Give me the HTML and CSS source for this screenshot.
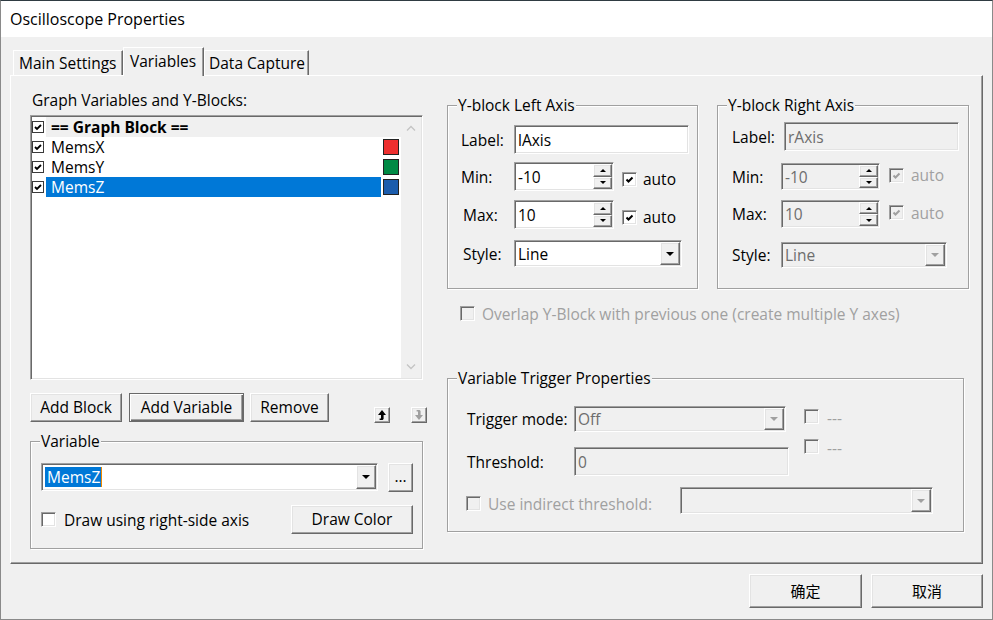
FILE: index.html
```html
<!DOCTYPE html>
<html>
<head>
<meta charset="utf-8">
<title>Oscilloscope Properties</title>
<link rel="stylesheet" href="styles.css">
</head>
<body>
<div class="window">
  <div class="titlebar">Oscilloscope Properties</div>

  <div class="tabs">
    <div class="tab tab-main">Main Settings</div>
    <div class="tab tab-vars active">Variables</div>
    <div class="tab tab-data">Data Capture</div>
  </div>

  <div class="panel">
    <div class="col-left">
      <div class="caption">Graph Variables and Y-Blocks:</div>

      <div class="listbox">
        <div class="list-items">
          <div class="li li-head">
            <span class="lcheck"><span class="lcb"><svg viewBox="0 0 10 10" width="10" height="10"><polyline points="2,5 4,7 8,3" class="ck"/></svg></span></span>
            <span class="ltext">== Graph Block ==</span>
            <span class="lswatch"></span>
          </div>
          <div class="li">
            <span class="lcheck"><span class="lcb"><svg viewBox="0 0 10 10" width="10" height="10"><polyline points="2,5 4,7 8,3" class="ck"/></svg></span></span>
            <span class="ltext">MemsX</span>
            <span class="lswatch"><span class="swatch sw-red"></span></span>
          </div>
          <div class="li">
            <span class="lcheck"><span class="lcb"><svg viewBox="0 0 10 10" width="10" height="10"><polyline points="2,5 4,7 8,3" class="ck"/></svg></span></span>
            <span class="ltext">MemsY</span>
            <span class="lswatch"><span class="swatch sw-green"></span></span>
          </div>
          <div class="li li-sel">
            <span class="lcheck"><span class="lcb"><svg viewBox="0 0 10 10" width="10" height="10"><polyline points="2,5 4,7 8,3" class="ck"/></svg></span></span>
            <span class="ltext">MemsZ</span>
            <span class="lswatch"><span class="swatch sw-blue"></span></span>
          </div>
        </div>
        <div class="vscroll">
          <svg class="chev chev-up" viewBox="0 0 10 6" width="10" height="6"><polyline points="1,5.5 5,1.5 9,5.5"/></svg>
          <svg class="chev chev-down" viewBox="0 0 10 6" width="10" height="6"><polyline points="1,0.5 5,4.5 9,0.5"/></svg>
        </div>
      </div>

      <div class="btnrow">
        <div class="btn btn-addblock">Add Block</div>
        <div class="btn btn-default btn-addvar">Add Variable</div>
        <div class="btn btn-remove">Remove</div>
        <div class="raised arrowbtn arrow-up"><svg viewBox="0 0 14 14" width="14" height="14"><polygon points="7,2 11,7 8.6,7 8.6,11 7.6,12 4.6,12 4.6,10.6 6,10.6 6,7 3,7" fill="#000"/></svg></div>
        <div class="raised arrowbtn arrow-down"><svg viewBox="0 0 14 14" width="14" height="14"><polygon points="7,12 11,7 8.6,7 8.6,3 7.6,2 4.6,2 4.6,3.4 6,3.4 6,7 3,7" fill="#a0a0a0"/></svg></div>
      </div>

      <fieldset class="group vargroup">
        <legend>Variable</legend>
        <div class="gbody vbody">
          <div class="var-row1">
            <div class="field combo-var">
              <span class="seltext">MemsZ</span>
              <span class="raised ddbtn"><span class="tri"></span></span>
            </div>
            <div class="btn btn-dots">...</div>
          </div>
          <div class="var-row2">
            <span class="cb"></span>
            <span class="cblabel">Draw using right-side axis</span>
            <div class="btn btn-drawcolor">Draw Color</div>
          </div>
        </div>
      </fieldset>
    </div>

    <div class="col-right">
      <div class="axisrow">
        <fieldset class="group fs-left">
          <legend>Y-block Left Axis</legend>
          <div class="gbody lbody">
            <div class="frow r1">
              <span class="flabel">Label:</span>
              <div class="field w175">lAxis</div>
            </div>
            <div class="frow r2">
              <span class="flabel">Min:</span>
              <div class="field w100">-10<span class="spin"><span class="raised spinbtn"><span class="tri-s up"></span></span><span class="raised spinbtn"><span class="tri-s"></span></span></span></div>
              <span class="cb autocb"><svg viewBox="0 0 11 11" width="11" height="11"><polyline points="2.5,5.5 4.5,7.5 8.5,3.5" class="ck2"/></svg></span>
              <span class="autotext">auto</span>
            </div>
            <div class="frow r3">
              <span class="flabel ind2">Max:</span>
              <div class="field w100">10<span class="spin"><span class="raised spinbtn"><span class="tri-s up"></span></span><span class="raised spinbtn"><span class="tri-s"></span></span></span></div>
              <span class="cb autocb"><svg viewBox="0 0 11 11" width="11" height="11"><polyline points="2.5,5.5 4.5,7.5 8.5,3.5" class="ck2"/></svg></span>
              <span class="autotext">auto</span>
            </div>
            <div class="frow r4">
              <span class="flabel ind2">Style:</span>
              <div class="field w168">Line<span class="raised ddbtn"><span class="tri"></span></span></div>
            </div>
          </div>
        </fieldset>

        <fieldset class="group fs-right">
          <legend>Y-block Right Axis</legend>
          <div class="gbody rbody">
            <div class="frow r1">
              <span class="flabel lw52">Label:</span>
              <div class="field dis w175">rAxis</div>
            </div>
            <div class="frow r2">
              <span class="flabel lw49">Min:</span>
              <div class="field dis w99">-10<span class="spin"><span class="raised spinbtn"><span class="tri-s up"></span></span><span class="raised spinbtn"><span class="tri-s"></span></span></span></div>
              <span class="cb dis autocb"><svg viewBox="0 0 11 11" width="11" height="11"><polyline points="2.5,5.5 4.5,7.5 8.5,3.5" class="ck2"/></svg></span>
              <span class="autotext distext">auto</span>
            </div>
            <div class="frow r3">
              <span class="flabel lw49">Max:</span>
              <div class="field dis w99">10<span class="spin"><span class="raised spinbtn"><span class="tri-s up"></span></span><span class="raised spinbtn"><span class="tri-s"></span></span></span></div>
              <span class="cb dis autocb"><svg viewBox="0 0 11 11" width="11" height="11"><polyline points="2.5,5.5 4.5,7.5 8.5,3.5" class="ck2"/></svg></span>
              <span class="autotext distext">auto</span>
            </div>
            <div class="frow r4">
              <span class="flabel lw49">Style:</span>
              <div class="field dis w166">Line<span class="raised ddbtn"><span class="tri dis"></span></span></div>
            </div>
          </div>
        </fieldset>
      </div>

      <div class="overlap">
        <span class="cb dis"></span>
        <span class="cblabel distext">Overlap Y-Block with previous one (create multiple Y axes)</span>
      </div>

      <fieldset class="group trigger">
        <legend>Variable Trigger Properties</legend>
        <div class="gbody tbody">
          <div class="trig-top">
            <div class="trig-fields">
              <div class="frow t1">
                <span class="flabel lw107">Trigger mode:</span>
                <div class="field dis w212">Off<span class="raised ddbtn"><span class="tri dis"></span></span></div>
              </div>
              <div class="frow t2">
                <span class="flabel lw107">Threshold:</span>
                <div class="field dis w215">0</div>
              </div>
            </div>
            <div class="trig-checks">
              <div class="tcheck"><span class="cb dis"></span><span class="dash distext">---</span></div>
              <div class="tcheck tcheck2"><span class="cb dis"></span><span class="dash distext">---</span></div>
            </div>
          </div>
          <div class="trig-ind">
            <span class="cb dis indcb"></span>
            <span class="ind-label distext">Use indirect threshold:</span>
            <div class="field dis w253"><span class="raised ddbtn"><span class="tri dis"></span></span></div>
          </div>
        </div>
      </fieldset>
    </div>
  </div>

  <div class="footer">
    <div class="btn btn-ok">确定</div>
    <div class="btn btn-cancel">取消</div>
  </div>
</div>
</body>
</html>
```
FILE: styles.css
```css
* { box-sizing: border-box; }
html, body { margin: 0; padding: 0; }
body {
  width: 993px; height: 620px; overflow: hidden;
  background: #f0f0f0; color: #000;
  font-family: "Open Sans", "Noto Sans CJK SC", sans-serif;
  font-size: 15.5px; line-height: 18px;
}
.window {
  width: 993px; height: 620px;
  border: 1px solid #8a8a8a; border-top-color: #2f3b42;
  display: flex; flex-direction: column;
}
.titlebar {
  flex: none; height: 36px; background: #fff;
  padding-left: 9px; font-size: 16px; line-height: 36px;
}

/* tabs */
.tabs { flex: none; height: 38px; display: flex; align-items: flex-end; padding-left: 12px; }
.tab {
  height: 25px; padding-left: 5px; line-height: 24px; white-space: nowrap;
  border-top: 1px solid #fff; border-left: 1px solid #fff; border-right: 1px solid #696969;
  box-shadow: inset -1px 0 0 #a0a0a0;
}
.tab-main { width: 110px; }
.tab-vars { width: 81px; padding-left: 6px; }
.tab-data { width: 105px; padding-left: 4px; }
.tab.active {
  height: 29px; padding-top: 1px; margin-bottom: -1px;
  background: #f0f0f0; position: relative; z-index: 1;
}

/* panel */
.panel {
  flex: none; margin-left: 9px; width: 973px; height: 489px;
  border-top: 1px solid #fff; border-left: 1px solid #fff;
  border-right: 1px solid #696969; border-bottom: 1px solid #696969;
  box-shadow: inset -1px -1px 0 #a0a0a0;
  display: flex; padding-left: 19px;
}
.col-left { width: 397px; flex: none; display: flex; flex-direction: column; }
.col-right { width: 521px; flex: none; margin-left: 20px; display: flex; flex-direction: column; }

.caption { margin-top: 15px; height: 18px; padding-left: 2px; }

/* sunken frames */
.listbox, .field, .cb {
  border: 1px solid; border-color: #a0a0a0 #fff #fff #a0a0a0;
  box-shadow: inset 1px 1px 0 #696969, inset -1px -1px 0 #e3e3e3;
  background: #fff;
}
.raised {
  background: #f0f0f0;
  border: 1px solid; border-color: #fff #696969 #696969 #fff;
  box-shadow: inset -1px -1px 0 #a0a0a0, inset 1px 1px 0 #e3e3e3;
}

/* list */
.listbox { margin-top: 6px; width: 393px; height: 265px; padding: 1px; display: flex; }
.list-items { width: 369px; flex: none; }
.li { height: 20px; display: flex; align-items: stretch; }
.lcheck { width: 14px; flex: none; display: flex; align-items: center; }
.lcb {
  width: 12px; height: 12px; border: 1px solid #3a3a3a; background: #fff;
  display: flex; align-items: center; justify-content: center;
}
.lcb svg { display: block; }
.ck { fill: none; stroke: #000; stroke-width: 1.8; }
.ltext { flex: 1; padding-left: 5px; line-height: 20px; white-space: nowrap; }
.lswatch { width: 20px; flex: none; display: flex; align-items: center; padding-left: 2px; }
.li-head .ltext, .li-head .lswatch { background: #f0f0f0; }
.li-head .ltext { font-weight: 700; }
.li-sel .ltext { background: #0078d7; color: #fff; }
.swatch { width: 16px; height: 16px; border: 1px solid #222; }
.sw-red { background: #ee2f2f; }
.sw-green { background: #008a45; }
.sw-blue { background: #1b5cac; }
.vscroll {
  width: 20px; flex: none; background: #f0f0f0;
  display: flex; flex-direction: column; align-items: center; justify-content: space-between;
  padding: 8px 0 8px;
}
.chev { display: block; }
.chev polyline { fill: none; stroke: #c4c4c4; stroke-width: 1.3; }

/* buttons */
.btn {
  height: 29px; background: #f0f0f0; text-align: center; line-height: 26px; white-space: nowrap;
  border: 1px solid; border-color: #fff #696969 #696969 #fff;
  box-shadow: inset -1px -1px 0 #a0a0a0, inset 1px 1px 0 #e3e3e3;
  flex: none;
}
.btn-default {
  border-color: #696969;
  box-shadow: inset 1px 1px 0 #fff, inset -1px -1px 0 #696969, inset -2px -2px 0 #a0a0a0;
}
.btnrow { margin-top: 13px; height: 30px; display: flex; align-items: flex-start; }
.btn-addblock { width: 92px; }
.btn-addvar { width: 115px; margin-left: 7px; }
.btn-remove { width: 79px; margin-left: 6px; }
.arrowbtn { width: 16px; height: 16px; margin-top: 14px; display: flex; align-items: center; justify-content: center; }
.arrowbtn svg { display: block; }
.arrow-up { margin-left: 45px; }
.arrow-down { margin-left: 21px; }

/* group boxes */
.group {
  margin: 0; padding: 0; min-width: 0; flex: none;
  border: 1px solid #a0a0a0;
  box-shadow: 1px 1px 0 #fff, inset 1px 1px 0 #fff;
}
.group > legend {
  margin-left: 9px; padding: 0 1px; line-height: 18px; background: #f0f0f0;
}
.gbody { display: flex; flex-direction: column; }

.vargroup { margin-top: 9px; width: 393px; height: 117px; }
.vbody { padding: 0 9px 0 10px; }
.var-row1 { margin-top: 13px; display: flex; align-items: flex-start; }
.combo-var { width: 337px; height: 28px; padding-left: 2px; }
.seltext {
  background: #0078d7; color: #fff; line-height: 20px; padding: 0 1px 0 2px;
  border-right: 1px solid #f08a00;
}
.btn-dots { width: 25px; margin-left: 10px; line-height: 24px; }
.var-row2 { margin-top: 13px; display: flex; align-items: center; height: 29px; }
.cblabel { margin-left: 8px; white-space: nowrap; }
.btn-drawcolor { width: 122px; margin-left: auto; }

/* fields */
.field {
  display: flex; align-items: center; padding-left: 3px; white-space: nowrap; flex: none;
}
.field.dis { background: #f0f0f0; color: #6d6d6d; }
.ddbtn {
  width: 20px; align-self: stretch; margin: 1px 1px 1px auto;
  display: flex; align-items: center; justify-content: center;
}
.tri { width: 0; height: 0; border-left: 4px solid transparent; border-right: 4px solid transparent; border-top: 4px solid #000; }
.tri.dis { border-top-color: #a0a0a0; }
.spin { margin: 1px 1px 1px auto; width: 19px; align-self: stretch; display: flex; flex-direction: column; }
.spinbtn { flex: 1; display: flex; align-items: center; justify-content: center; }
.tri-s { width: 0; height: 0; border-left: 3px solid transparent; border-right: 3px solid transparent; border-top: 3px solid #000; }
.tri-s.up { border-top: 0; border-bottom: 3px solid #000; }

.w175 { width: 175px; height: 29px; }
.w100 { width: 100px; height: 29px; }
.w99 { width: 99px; }
.w168 { width: 168px; height: 27px; }
.w166 { width: 166px; height: 26px; }
.w212 { width: 212px; height: 26px; }
.w215 { width: 215px; height: 29px; }
.w253 { width: 253px; height: 27px; }

.cb {
  width: 15px; height: 15px; flex: none;
  display: inline-flex; align-items: center; justify-content: center;
}
.cb svg { display: block; }
.ck2 { fill: none; stroke: #000; stroke-width: 2; }
.cb.dis { background: #f0f0f0; }
.cb.dis .ck2 { stroke: #a0a0a0; }
.distext { color: #a0a0a0; }

/* axis groups */
.axisrow { margin-top: 20px; height: 193px; display: flex; flex: none; }
.fs-left { width: 251px; height: 193px; }
.fs-right { width: 252px; height: 193px; margin-left: 19px; }
.lbody { padding-left: 13px; }
.rbody { padding-left: 14px; }
.frow { display: flex; align-items: center; }
.flabel { width: 53px; flex: none; white-space: nowrap; }
.flabel.ind2 { padding-left: 2px; }
.lw52 { width: 52px; }
.lw49 { width: 49px; }
.lw107 { width: 107px; }
.autocb { margin-left: 8px; margin-top: 5px; }
.autotext { margin-left: 6px; margin-top: 5px; }

.lbody .r1 { margin-top: 11px; }
.lbody .r2 { margin-top: 8px; }
.lbody .r3 { margin-top: 9px; }
.lbody .r4 { margin-top: 11px; }

.rbody .r1 { margin-top: 8px; }
.rbody .r2 { margin-top: 12px; }
.rbody .r2 .field { height: 27px; }
.rbody .r3 { margin-top: 10px; }
.rbody .r3 .field { height: 28px; }
.rbody .r4 { margin-top: 14px; }
.rbody .autocb { margin-left: 9px; margin-top: -3px; }
.rbody .autotext { margin-left: 7px; margin-top: -3px; }

/* overlap */
.overlap { margin-top: 17px; height: 15px; display: flex; align-items: center; padding-left: 13px; flex: none; }
.overlap .cblabel { margin-left: 7px; }

/* trigger */
.trigger { margin-top: 48px; width: 517px; height: 163px; }
.tbody { padding-left: 19px; }
.trig-top { display: flex; }
.trig-fields { display: flex; flex-direction: column; }
.t1 { margin-top: 19px; }
.t2 { margin-top: 15px; }
.trig-checks { margin-left: 15px; margin-top: 22px; display: flex; flex-direction: column; }
.tcheck { display: flex; align-items: center; height: 15px; }
.tcheck2 { margin-top: 15px; }
.dash { margin-left: 8px; margin-top: 2px; }
.tcheck2 .dash { margin-top: 3px; }
.trig-ind { margin-top: 11px; height: 27px; display: flex; align-items: center; }
.indcb { margin-left: -1px; margin-top: 6px; }
.ind-label { width: 199px; padding-left: 7px; margin-top: 6px; white-space: nowrap; flex: none; }

/* footer */
.footer { flex: none; margin-top: 10px; display: flex; justify-content: flex-end; padding-right: 9px; }
.btn-ok, .btn-cancel { height: 34px; line-height: 31px; font-family: "Noto Sans CJK SC", sans-serif; font-size: 15px; }
.btn-ok { width: 113px; }
.btn-cancel { width: 112px; margin-left: 9px; }
```
